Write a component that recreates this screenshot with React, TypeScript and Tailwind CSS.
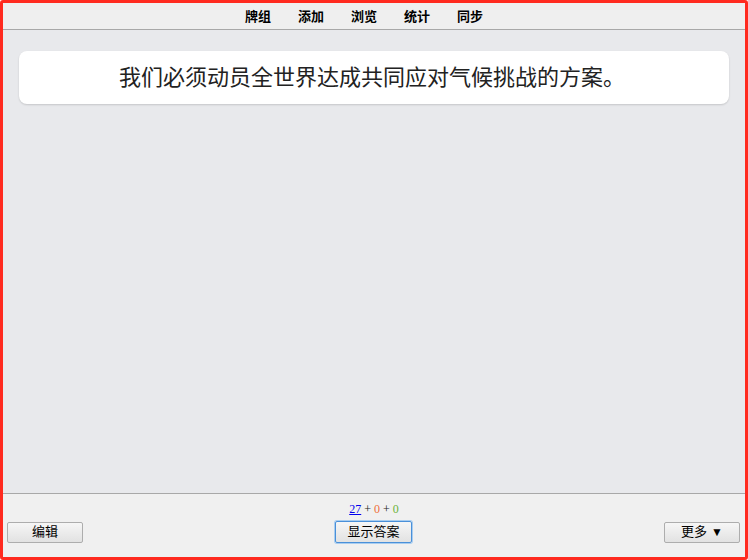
export default function App() {
  const nav = ["牌组", "添加", "浏览", "统计", "同步"];
  return (
    <div className="w-[748px] h-[560px] box-border border-[3px] border-[#ff2a1f] rounded-[3px] flex flex-col bg-[#e8e9ec] font-['Liberation_Sans','Noto_Sans_CJK_SC',sans-serif] overflow-hidden">
      <div className="h-[27px] shrink-0 bg-[#efefef] border-b border-[#a8a8a8] flex items-center justify-center gap-[27px] pr-[20px] text-[13px] font-bold text-black">
        {nav.map((n) => (
          <span key={n} className="leading-none">
            {n}
          </span>
        ))}
      </div>
      <div className="flex-1 px-[16px] pt-[21px]">
        <div className="h-[53px] bg-white rounded-[8px] shadow-[0_1px_2px_rgba(0,0,0,0.15)] flex items-center justify-center pr-[4px] text-[22px] text-[#222]">
          我们必须动员全世界达成共同应对气候挑战的方案。
        </div>
      </div>
      <div className="h-[64px] shrink-0 bg-[#f0f0f0] border-t border-[#a8a8a8] flex flex-col">
        <div className="h-[27px] flex items-center justify-center text-[12px] font-['Liberation_Serif',serif] gap-[3px] pt-[2px]">
          <span className="text-[#0000ee] underline">27</span>
          <span className="text-[#222]">+</span>
          <span className="text-[#ef6f3a]">0</span>
          <span className="text-[#222]">+</span>
          <span className="text-[#6bb33a]">0</span>
        </div>
        <div className="flex items-center justify-between px-[4px]">
          <button className="w-[76px] h-[21px] text-[13px] text-black border border-[#adadad] rounded-[2px] bg-gradient-to-b from-[#f6f6f6] to-[#e2e2e2] flex items-center justify-center">
            编辑
          </button>
          <button className="w-[77px] h-[22px] text-[13px] text-black border border-[#4a90d9] rounded-[2px] bg-gradient-to-b from-[#f6f6f6] to-[#e2e2e2] flex items-center justify-center shadow-[0_0_0_1px_#a8cdf0]">
            显示答案
          </button>
          <button className="w-[76px] h-[21px] mr-[1px] text-[13px] text-black border border-[#adadad] rounded-[2px] bg-gradient-to-b from-[#f6f6f6] to-[#e2e2e2] flex items-center justify-center gap-[4px]">
            更多 <span className="text-[12px]">▼</span>
          </button>
        </div>
      </div>
    </div>
  );
}
